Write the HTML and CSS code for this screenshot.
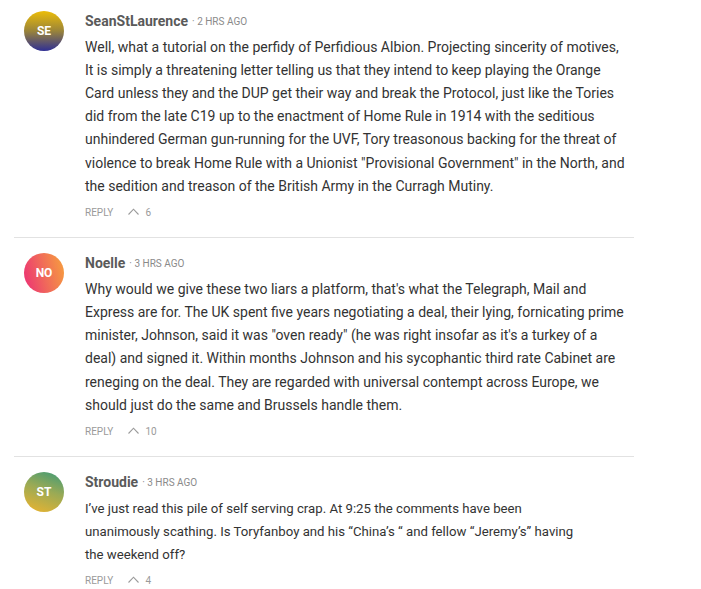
FILE: index.html
```html
<!DOCTYPE html>
<html>
<head>
<meta charset="utf-8">
<link rel="stylesheet" href="styles.css">
</head>
<body>
<div class="comments">
  <div class="comment">
    <div class="avatar av-se">SE</div>
    <div class="body">
      <div class="head"><span class="name">SeanStLaurence</span><span class="time">· 2 HRS AGO</span></div>
      <p class="text">Well, what a tutorial on the perfidy of Perfidious Albion. Projecting sincerity of motives, It is simply a threatening letter telling us that they intend to keep playing the Orange Card unless they and the DUP get their way and break the Protocol, just like the Tories did from the late C19 up to the enactment of Home Rule in 1914 with the seditious unhindered German gun-running for the UVF, Tory treasonous backing for the threat of violence to break Home Rule with a Unionist "Provisional Government" in the North, and the sedition and treason of the British Army in the Curragh Mutiny.</p>
      <div class="actions"><span class="reply">REPLY</span><svg class="up" width="11" height="7" viewBox="0 0 11 7"><path d="M0.5 6.5 L5.5 1.2 L10.5 6.5" fill="none" stroke="#9a9a9a" stroke-width="1.1"/></svg><span class="count">6</span></div>
    </div>
  </div>
  <div class="comment">
    <div class="avatar av-no">NO</div>
    <div class="body">
      <div class="head"><span class="name">Noelle</span><span class="time">· 3 HRS AGO</span></div>
      <p class="text">Why would we give these two liars a platform, that's what the Telegraph, Mail and Express are for. The UK spent five years negotiating a deal, their lying, fornicating prime minister, Johnson, said it was "oven ready" (he was right insofar as it's a turkey of a deal) and signed it. Within months Johnson and his sycophantic third rate Cabinet are reneging on the deal. They are regarded with universal contempt across Europe, we should just do the same and Brussels handle them.</p>
      <div class="actions"><span class="reply">REPLY</span><svg class="up" width="11" height="7" viewBox="0 0 11 7"><path d="M0.5 6.5 L5.5 1.2 L10.5 6.5" fill="none" stroke="#9a9a9a" stroke-width="1.1"/></svg><span class="count">10</span></div>
    </div>
  </div>
  <div class="comment">
    <div class="avatar av-st">ST</div>
    <div class="body">
      <div class="head"><span class="name">Stroudie</span><span class="time">· 3 HRS AGO</span></div>
      <p class="text text-narrow">I’ve just read this pile of self serving crap. At 9:25 the comments have been unanimously scathing. Is Toryfanboy and his “China’s “ and fellow “Jeremy’s” having the weekend off?</p>
      <div class="actions"><span class="reply">REPLY</span><svg class="up" width="11" height="7" viewBox="0 0 11 7"><path d="M0.5 6.5 L5.5 1.2 L10.5 6.5" fill="none" stroke="#9a9a9a" stroke-width="1.1"/></svg><span class="count">4</span></div>
    </div>
  </div>
</div>
</body>
</html>
```

FILE: styles.css
```css
html, body {
  margin: 0;
  padding: 0;
  background: #ffffff;
}
body {
  font-family: Roboto, "Liberation Sans", sans-serif;
  color: #333333;
}
.comments {
  width: 620px;
  margin-left: 14px;
}
.comment {
  display: flex;
  padding: 15px 0 15px 10px;
  border-top: 1px solid #e2e2e2;
}
.comment:first-child {
  padding-top: 11px;
  border-top: none;
}
.avatar {
  flex: 0 0 40px;
  width: 40px;
  height: 40px;
  border-radius: 50%;
  display: flex;
  align-items: center;
  justify-content: center;
  color: #ffffff;
  font-weight: 700;
  font-size: 12px;
  margin-right: 21px;
}
.av-se { background: linear-gradient(180deg, #ecbd08 0%, #9a843a 50%, #2f2f94 100%); }
.av-no { background: linear-gradient(75deg, #ec2e76 0%, #f06a5a 50%, #f7a23c 100%); }
.av-st { background: linear-gradient(20deg, #eeb42e 0%, #9aaa55 55%, #3c9a78 100%); }
.body {
  flex: 1;
  min-width: 0;
}
.head {
  height: 20px;
  display: flex;
  align-items: center;
}
.name {
  font-size: 14px;
  font-weight: 700;
  color: #5a5a5a;
}
.time {
  font-size: 10px;
  color: #8a8a8a;
  margin-left: 4px;
  margin-top: 1px;
}
.text {
  margin: 4.5px 0 0 0;
  max-width: 540px;
  font-size: 14px;
  line-height: 23.2px;
  color: #333333;
}
.text-narrow {
  max-width: 500px;
  font-size: 13.2px;
  line-height: 23px;
}
.actions {
  height: 20px;
  margin-top: 4.4px;
  display: flex;
  align-items: center;
  font-size: 10px;
  color: #9a9a9a;
}
.reply {
  margin-right: 15px;
}
.up {
  margin-right: 6px;
  margin-bottom: 1px;
}
```
